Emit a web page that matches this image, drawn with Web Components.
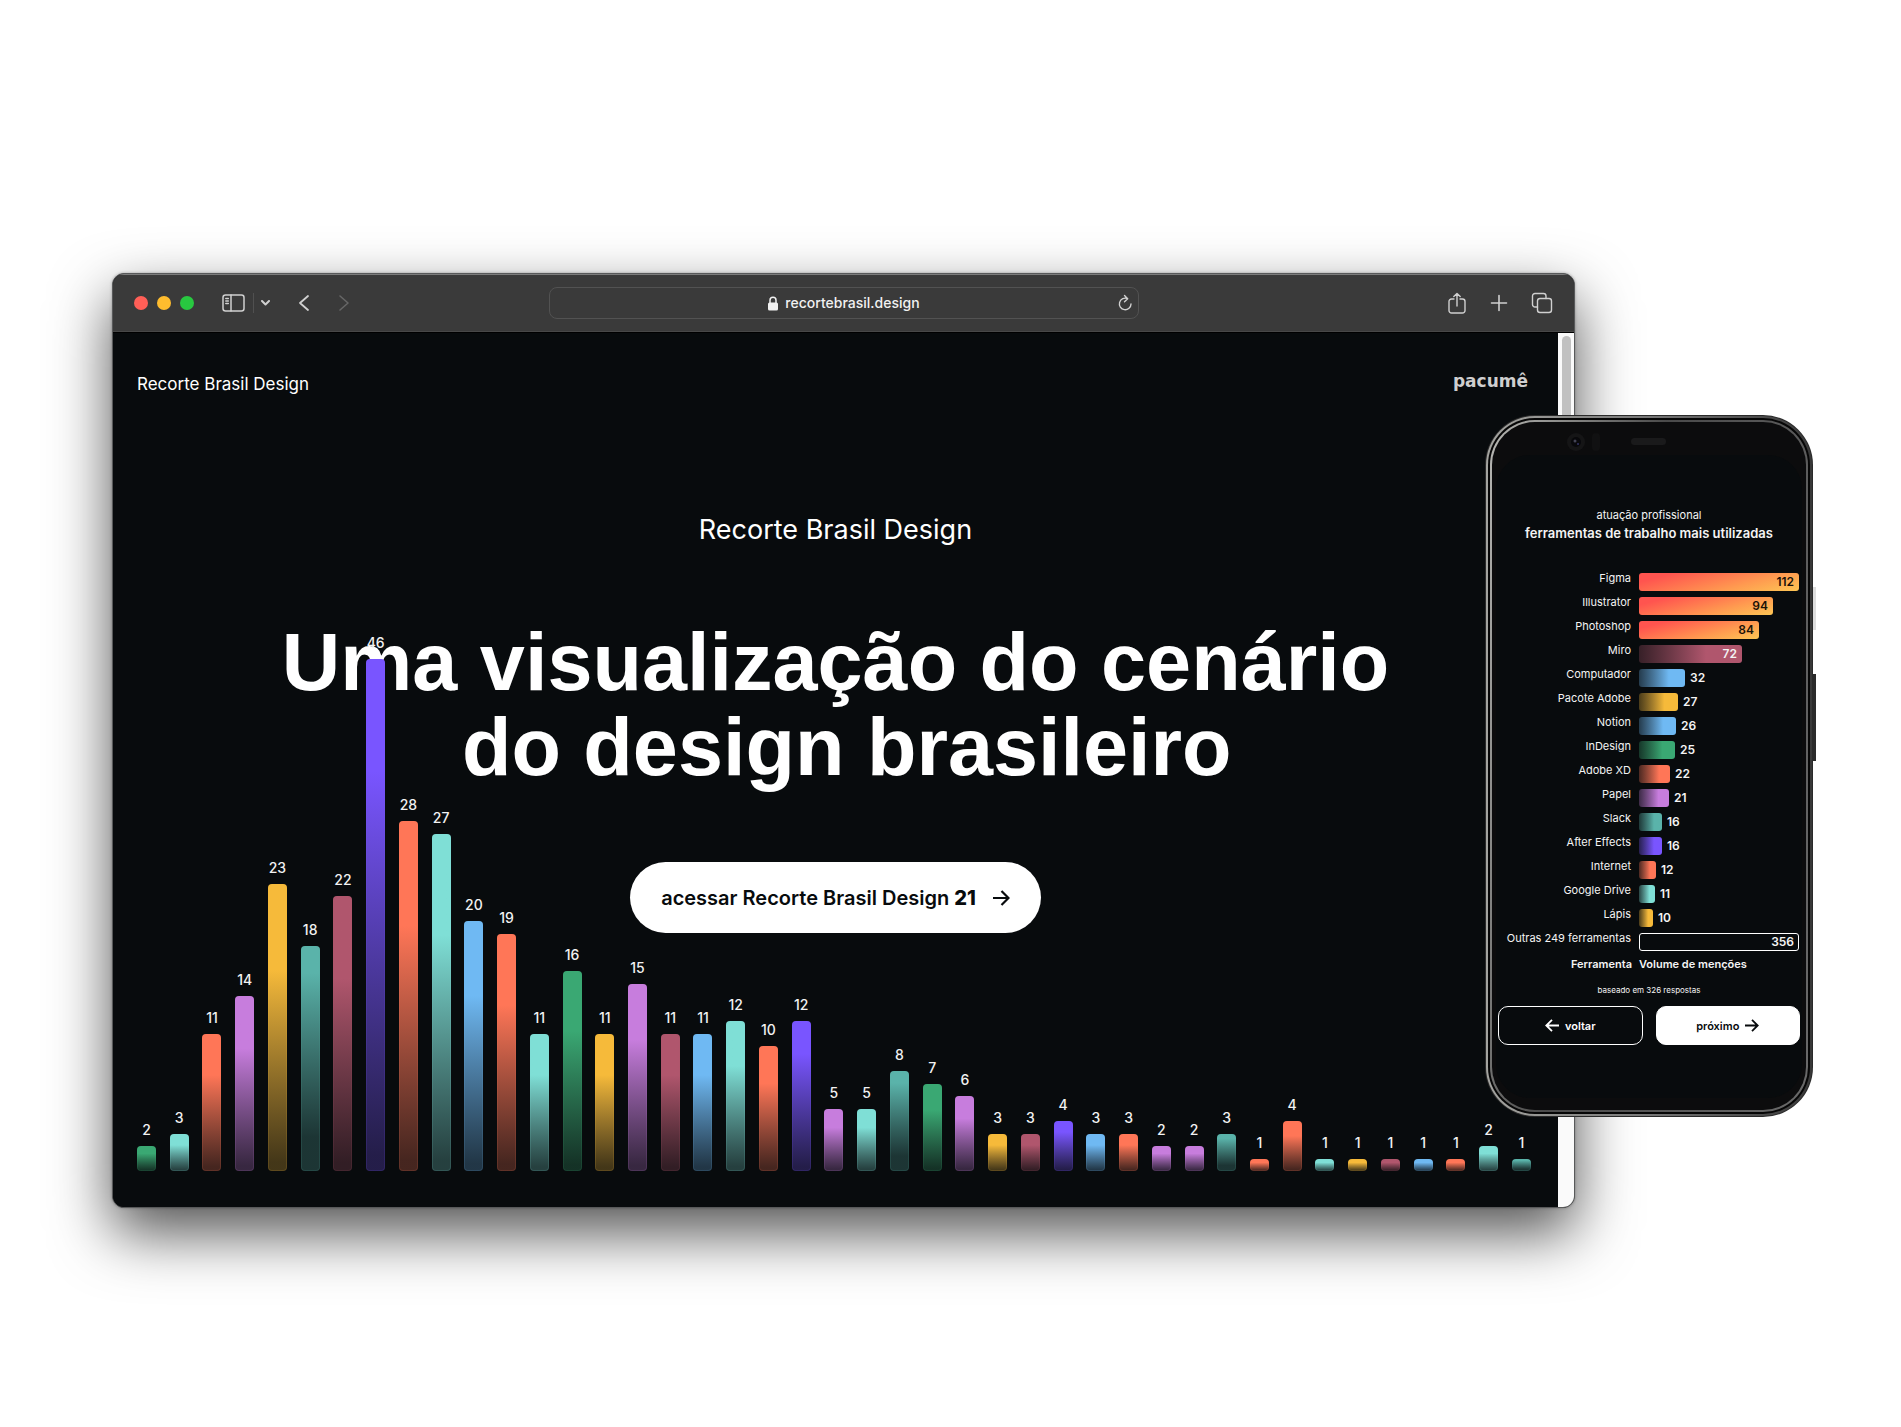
<!DOCTYPE html>
<html lang="pt-BR">
<head>
<meta charset="utf-8">
<title>Recorte Brasil Design</title>
<style>
  html { background: #fff; }
  body { margin: 0; font-family: Inter, "Liberation Sans", sans-serif; color: #fff; }
</style>
</head>
<body>
<device-stage>
  <browser-window address="recortebrasil.design">
    <landing-page></landing-page>
  </browser-window>
  <phone-frame slot="phone">
    <tools-chart></tools-chart>
  </phone-frame>
</device-stage>

<script>
const C = {
  green: '#3aa873', aqua: '#7fdfd6', orange: '#ff7657', purple: '#c77ddd', yellow: '#f6ba3a',
  teal: '#5ab3aa', rose: '#b0566d', violet: '#7955ff', blue: '#6fb9f3'
};
const base = ':host,*{box-sizing:border-box}button{font:inherit;margin:0;cursor:pointer}';
const mount = (el, html) => {
  const root = el.attachShadow({ mode: 'open' });
  root.innerHTML = html;
  return root;
};

customElements.define('device-stage', class extends HTMLElement {
  connectedCallback() {
    mount(this, `<style>${base}
      :host{display:block;position:relative;min-height:100vh;padding:273px 326px 120px 112px;overflow:hidden;background:#fff}
      .phone{position:absolute;top:415px;right:88px;width:328px}
    </style><slot></slot><div class="phone"><slot name="phone"></slot></div>`);
  }
});

customElements.define('browser-window', class extends HTMLElement {
  connectedCallback() {
    mount(this, `<style>${base}
      :host{display:block;border-radius:12px;box-shadow:0 25px 60px rgba(0,0,0,.68),0 0 3px rgba(0,0,0,.3);background:#080b0d;border:1px solid #58595a;overflow:hidden}
      header{display:grid;grid-template-columns:1fr 590px 1fr;align-items:center;height:59px;padding:0 21px;background:#3a3a3a;box-shadow:inset 0 1px #7c7c7c,inset 0 -1px #484848;border-bottom:1px solid #000}
      .left,.right{display:flex;align-items:center}
      .right{justify-content:flex-end;gap:23px}
      .dots{display:flex;gap:9px;margin-right:28px}
      i{width:14px;height:14px;border-radius:50%}
      button{display:flex;padding:0;border:0;background:none;color:#d0d0d0}
      svg{display:block;fill:none;stroke:currentColor;stroke-linecap:round;stroke-linejoin:round}
      .rule{width:1px;height:20px;margin:0 7px}
      .rule{background:#505050}
      .history{display:flex;gap:28px;margin-left:28px}
      .forward{color:#666}
      .bar{display:flex;align-items:center;justify-content:center;position:relative;height:32px;border:1px solid #525252;border-radius:8px;gap:6px;color:#f1f1f1}
      .bar input{field-sizing:content;padding:0;border:0;background:none;font:500 14px/20px Inter,sans-serif;color:inherit;outline:0}
      .bar button{position:absolute;right:5px;top:6px}
      .page{display:grid;grid-template-columns:minmax(0,1fr) 16px}
      .track{background:#fafafa;padding:3px 3px 3px 4px}
      .thumb{height:420px;border-radius:5px;background:#c1c1c1}
    </style>
    <header>
      <div class="left">
        <div class="dots"><i style="background:#ff5f57"></i><i style="background:#febc2e"></i><i style="background:#28c840"></i></div>
        <button aria-label="Barra lateral"><svg width="24" height="18" viewBox="0 0 24 18" stroke-width="1.5"><rect x="1" y="1" width="21" height="16" rx="2.5"/><path d="M9 1v16M3.800 4.500h2.500M3.800 7h2.500M3.800 9.500h2.500"/></svg></button>
        <span class="rule"></span>
        <button aria-label="Grupos de abas"><svg width="9" height="6" viewBox="0 0 9 6" stroke-width="2"><path d="M1 1l3.500 3.500L8 1"/></svg></button>
        <div class="history">
          <button aria-label="Voltar"><svg width="12" height="18" viewBox="0 0 12 18" stroke-width="1.800"><path d="M10 2L2 9l8 7"/></svg></button>
          <button class="forward" aria-label="Avançar"><svg width="12" height="18" viewBox="0 0 12 18" stroke-width="1.600"><path d="M2 2l8 7-8 7"/></svg></button>
        </div>
      </div>
      <div class="bar">
        <svg width="12" height="15" viewBox="0 0 12 15" style="stroke-width:1.5"><path d="M3 7V4.200a3 3 0 0 1 6 0V7"/><rect x="1" y="6.500" width="10" height="8" rx="1.500" fill="currentColor" stroke="none"/></svg>
        <input aria-label="Endereço" value="${this.getAttribute('address')}" size="20">
        <button aria-label="Recarregar"><svg width="15" height="18" viewBox="0 0 15 18" stroke-width="1.400"><path d="M9.500 4.600A5.800 5.800 0 1 0 13 10M6.500 1.500l3.200 3.200-3.200 3"/></svg></button>
      </div>
      <div class="right">
        <button aria-label="Compartilhar"><svg width="20" height="23" viewBox="0 0 20 23" stroke-width="1.400"><path d="M7 7H4.500A2.500 2.500 0 0 0 2 9.500v9A2.500 2.500 0 0 0 4.500 21h11a2.500 2.500 0 0 0 2.500-2.500v-9A2.500 2.500 0 0 0 15.500 7H13M10 14V1.500M6.800 4.500L10 1.400l3.200 3.100"/></svg></button>
        <button aria-label="Nova aba"><svg width="18" height="18" viewBox="0 0 18 18" stroke-width="1.600"><path d="M9 1.500v15M1.500 9h15"/></svg></button>
        <button aria-label="Visão geral das abas"><svg width="22" height="22" viewBox="0 0 22 22" stroke-width="1.400"><rect x="6.500" y="6.500" width="14" height="14" rx="2.500"/><path d="M6.500 15H4a2.500 2.500 0 0 1-2.500-2.500V4A2.500 2.500 0 0 1 4 1.500h8.500A2.500 2.500 0 0 1 15 4v2.500"/></svg></button>
      </div>
    </header>
    <div class="page"><slot></slot><div class="track"><div class="thumb"></div></div></div>`);
  }
});

customElements.define('landing-page', class extends HTMLElement {
  connectedCallback() {
    mount(this, `<style>${base}
      :host{display:grid;background:#080b0d;color:#fff;min-height:874px}
      .top,.hero,bar-chart{grid-area:1/1;min-width:0}
      .top{display:flex;justify-content:space-between;align-items:flex-start;align-self:start;padding:39px 30px 0 24px;font-size:17px;line-height:24px}
      .top a{color:inherit;text-decoration:none}
      .top .brand{font:700 17px/18px "DejaVu Sans",sans-serif;color:#cfcfcf}
      .hero{display:flex;flex-direction:column;align-items:center;padding-top:178px;text-align:center}
      p{margin:0;font-size:27px;line-height:38px}
      h1{margin:71px 0 0;font:700 81px/85px "Liberation Sans",sans-serif;white-space:nowrap}
      .cta{display:flex;align-items:center;justify-content:center;gap:17px;height:71px;margin-top:72px;padding:0 31px;border:0;border-radius:36px;background:#fff;color:#080b0d;font-size:20px;font-weight:600;white-space:nowrap}
      .cta b{font-weight:800}
      .cta svg{display:block;fill:none;stroke:currentColor;stroke-width:2.2}
      bar-chart{align-self:end;padding:0 27px 36px 24px}
    </style>
    <div class="hero">
      <p>Recorte Brasil Design</p>
      <h1>Uma visualização do cenário<br>&nbsp;do design brasileiro</h1>
      <button class="cta"><span>acessar Recorte Brasil Design <b>21</b></span>
      <svg width="17" height="16" viewBox="0 0 17 16"><path d="M0 8h15M8.500 1l7 7-7 7"/></svg></button>
    </div>
    <div class="top"><a href="#">Recorte Brasil Design</a><a class="brand" href="#">pacumê</a></div>
    <bar-chart></bar-chart>`);
  }
});

customElements.define('bar-chart', class extends HTMLElement {
  connectedCallback() {
    const values = [2,3,11,14,23,18,22,46,28,27,20,19,11,16,11,15,11,11,12,10,12,5,5,8,7,6,3,3,4,3,3,2,2,3,1,4,1,1,1,1,1,2,1];
    const key = { G:'green', A:'aqua', O:'orange', P:'purple', Y:'yellow', T:'teal', R:'rose', V:'violet', B:'blue' };
    const order = 'GAOPYTRVOABOAGYPRBAOVPATGPYRVBOPPTOOAYRBOAT';
    // the tallest column is capped at 41 units
    mount(this, `<style>${base}
      :host{display:flex;justify-content:space-between;align-items:flex-end;pointer-events:none}
      .col{display:flex;flex-direction:column;align-items:center;width:19px}
      span{font-size:14px;line-height:16px;font-weight:500;margin-bottom:8px;color:#f2f2f2}
      .bar{width:19px;border-radius:4px;background:linear-gradient(var(--c) 30%,color-mix(in srgb,var(--c),#080b0d 75%) 97%);box-shadow:inset 0 0 0 1px color-mix(in srgb,var(--c),transparent 85%)}
      .violet{background:linear-gradient(var(--c) 22%,color-mix(in srgb,var(--c),#080b0d 75%) 97%)}
      .teal{background:linear-gradient(var(--c) 12%,color-mix(in srgb,var(--c),#080b0d 75%) 85%)}
    </style>` + values.map((v, i) => {
      const name = key[order[i]];
      return `<div class="col"><span>${v}</span><div class="bar ${name}" style="--c:${C[name]};height:${Math.floor(Math.min(v, 41) * 12.5)}px"></div></div>`;
    }).join(''));
  }
});

customElements.define('phone-frame', class extends HTMLElement {
  connectedCallback() {
    mount(this, `<style>${base}
      :host{display:block;position:relative}
      .ring{border-radius:50px;padding:1px;background:#2a2a2a}
      .ring>div{border-radius:49px;padding:2px;background:linear-gradient(90deg,#a4a4a0,#777 50%,#383838)}
      .ring>div>div{border-radius:47px;padding:2px;background:#060606}
      .edge{border-radius:45px;padding:2px;background:linear-gradient(100deg,#b8b8b4,#4a4a4a 40%,#6a6a6a)}
      .body{border-radius:43px;background:#0c0c0d;padding:33px 4px 12px}
      .cam{position:absolute;left:81px;top:17px}
      .screen{display:block;border-radius:34px;background:#080b0d;min-height:643px}
      .key{position:absolute;left:100%;width:3px}
      .a{top:172px;height:43px;background:#ddd}
      .b{top:259px;height:87px;background:#2a2a2a}
    </style>
    <span class="key a"></span><span class="key b"></span>
    <div class="ring"><div><div><div class="edge"><div class="body"><div class="screen"><slot></slot></div></div></div></div></div></div>
    <svg class="cam" width="110" height="20" viewBox="0 0 110 20"><circle cx="10" cy="10" r="9" fill="#151516"/><circle cx="10" cy="10" r="5" fill="#08080b"/><circle cx="9" cy="9" r="1.500" fill="#445"/><circle cx="12" cy="12" r="1" fill="#336"/><rect x="26" y="1" width="8" height="18" rx="4" fill="#111112"/><rect x="65" y="6" width="35" height="7" rx="3.500" fill="#1a1a1b"/></svg>`);
  }
});

customElements.define('tools-chart', class extends HTMLElement {
  connectedCallback() {
    const rows = [['Figma',112,'hot'],['Illustrator',94,'hot'],['Photoshop',84,'hot'],['Miro',72,'rose'],['Computador',32,'blue'],['Pacote Adobe',27,'yellow'],['Notion',26,'blue'],['InDesign',25,'green'],['Adobe XD',22,'orange'],['Papel',21,'purple'],['Slack',16,'teal'],['After Effects',16,'violet'],['Internet',12,'orange'],['Google Drive',11,'aqua'],['Lápis',10,'yellow'],['Outras 249 ferramentas',356,'rest']];
    mount(this, `<style>${base}
      :host{display:block;padding:52px 2px 0;color:#f4f4f4;font-size:11px;line-height:16px}
      .sub,h2,.note{margin:0;text-align:center;white-space:nowrap}
      h2{font-size:13px;line-height:20px;font-weight:600}
      .grid{display:grid;grid-template-columns:133px 160px;column-gap:8px;grid-auto-rows:24px;margin-top:30px}
      .name{text-align:right;white-space:nowrap;margin-top:-3px}
      .cell{display:flex;align-items:flex-start;gap:5px;line-height:18px;font-size:12px;font-weight:600}
      .bar{display:flex;justify-content:flex-end;height:18px;padding-right:5px;border-radius:3px;background:linear-gradient(90deg,color-mix(in srgb,var(--c),#080b0d 72%),var(--c) 65%)}
      .hot{background:linear-gradient(165deg,#ff544f 15%,#ff9a50 65%,#fdc654);color:#1a1208}
      .rest{background:none;border:1px solid #fff;line-height:16px;padding-right:4px}
      .axis{display:grid;grid-template-columns:134px 1fr;column-gap:7px;font-weight:600;margin-top:-1px}
      .axis span:first-child{text-align:right}
      .note{font-size:8px;margin-top:10px}
      .nav{display:grid;grid-template-columns:1fr 1fr;gap:13px;margin-top:8px}
      button{display:flex;align-items:center;justify-content:center;gap:6px;height:39px;border:1px solid #fff;border-radius:10px;background:none;color:#fff;font-weight:600;font-size:11px}
      .next{background:#fff;color:#080b0d}
      svg{fill:none;stroke:currentColor;stroke-width:1.8}
    </style>
    <p class="sub">atuação profissional</p>
    <h2>ferramentas de trabalho mais utilizadas</h2>
    <div class="grid">${rows.map(([n, v, c]) => {
      const inside = v > 60, w = Math.round(Math.min(v, 112) / 112 * 160);
      return `<span class="name">${n}</span><div class="cell"><div class="bar ${c}" style="--c:${C[c] || '#fff'};width:${w}px">${inside ? `<span>${v}</span>` : ''}</div>${inside ? '' : `<span>${v}</span>`}</div>`;
    }).join('')}</div>
    <div class="axis"><span>Ferramenta</span><span>Volume de menções</span></div>
    <p class="note">baseado em 326 respostas</p>
    <div class="nav">
      <button><svg width="14" height="13" viewBox="0 0 14 13"><path d="M14 6.500H1.500M7 .8L1.300 6.500 7 12.200"/></svg>voltar</button>
      <button class="next">próximo<svg width="14" height="13" viewBox="0 0 14 13"><path d="M0 6.500h12.500M7 .8l5.700 5.700L7 12.200"/></svg></button>
    </div>`);
  }
});
</script>
</body>
</html>
